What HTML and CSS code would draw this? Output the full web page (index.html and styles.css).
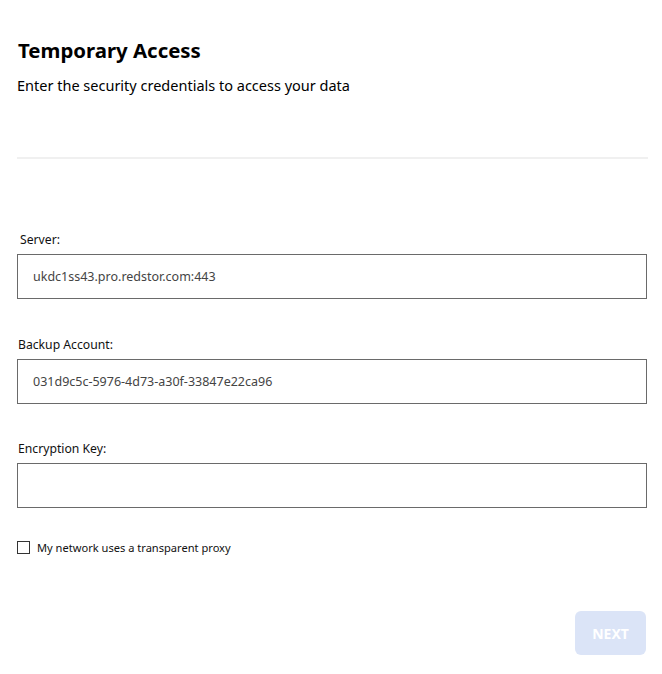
FILE: index.html
```html
<!DOCTYPE html>
<html>
<head>
<meta charset="utf-8">
<link rel="stylesheet" href="styles.css">
</head>
<body>
<div class="page">
  <header class="head">
    <h1 class="title">Temporary Access</h1>
    <p class="subtitle">Enter the security credentials to access your data</p>
  </header>
  <hr class="sep">
  <form class="form">
    <div class="field field-server">
      <label class="label">Server:</label>
      <div class="input">ukdc1ss43.pro.redstor.com:443</div>
    </div>
    <div class="field">
      <label class="label">Backup Account:</label>
      <div class="input">031d9c5c-5976-4d73-a30f-33847e22ca96</div>
    </div>
    <div class="field field-last">
      <label class="label">Encryption Key:</label>
      <div class="input"></div>
    </div>
    <label class="check"><span class="box"></span><span>My network uses a transparent proxy</span></label>
    <div class="actions">
      <button type="button" class="next">NEXT</button>
    </div>
  </form>
</div>
</body>
</html>
```

FILE: styles.css
```css
html, body { margin: 0; padding: 0; background: #fff; }
body { font-family: "Noto Sans", "Open Sans", sans-serif; color: #000; }
.page { padding: 34px 14px 0 17px; }
.head { padding-left: 1px; }
.title { margin: 0; font-size: 20.4px; font-weight: 700; line-height: 32px; }
.subtitle { margin: 8px 0 0 -1px; font-size: 14.5px; line-height: 22px; }
.sep { margin: 61px 0 0 0; border: 0; height: 2px; background: #f0f0f0; width: 631px; }
.form { margin-top: 72px; display: flex; flex-direction: column; }
.field { display: flex; flex-direction: column; margin-bottom: 36px; }
.field-server { margin-bottom: 37px; }
.field-last { margin-bottom: 34px; }
.label { font-size: 12.2px; line-height: 18px; margin-bottom: 5px; padding-left: 1px; color: #111; }
.field-server .label { padding-left: 3px; }
.input { box-sizing: border-box; width: 630px; height: 45px; border: 1px solid #6a6a6a; padding: 0 15px; font-size: 12.5px; line-height: 43px; color: #444; }
.check { display: flex; align-items: center; gap: 7px; font-size: 11.1px; color: #111; margin-top: -2px; }
.box { box-sizing: border-box; width: 13px; height: 13px; border: 1px solid #333; background: #fff; }
.actions { display: flex; justify-content: flex-end; margin-top: 56px; padding-right: 2px; }
.next { width: 71px; height: 44px; border: 0; border-radius: 6px; background: #dbe4f7; color: #fff; font-family: inherit; font-weight: 700; font-size: 14px; }
```
